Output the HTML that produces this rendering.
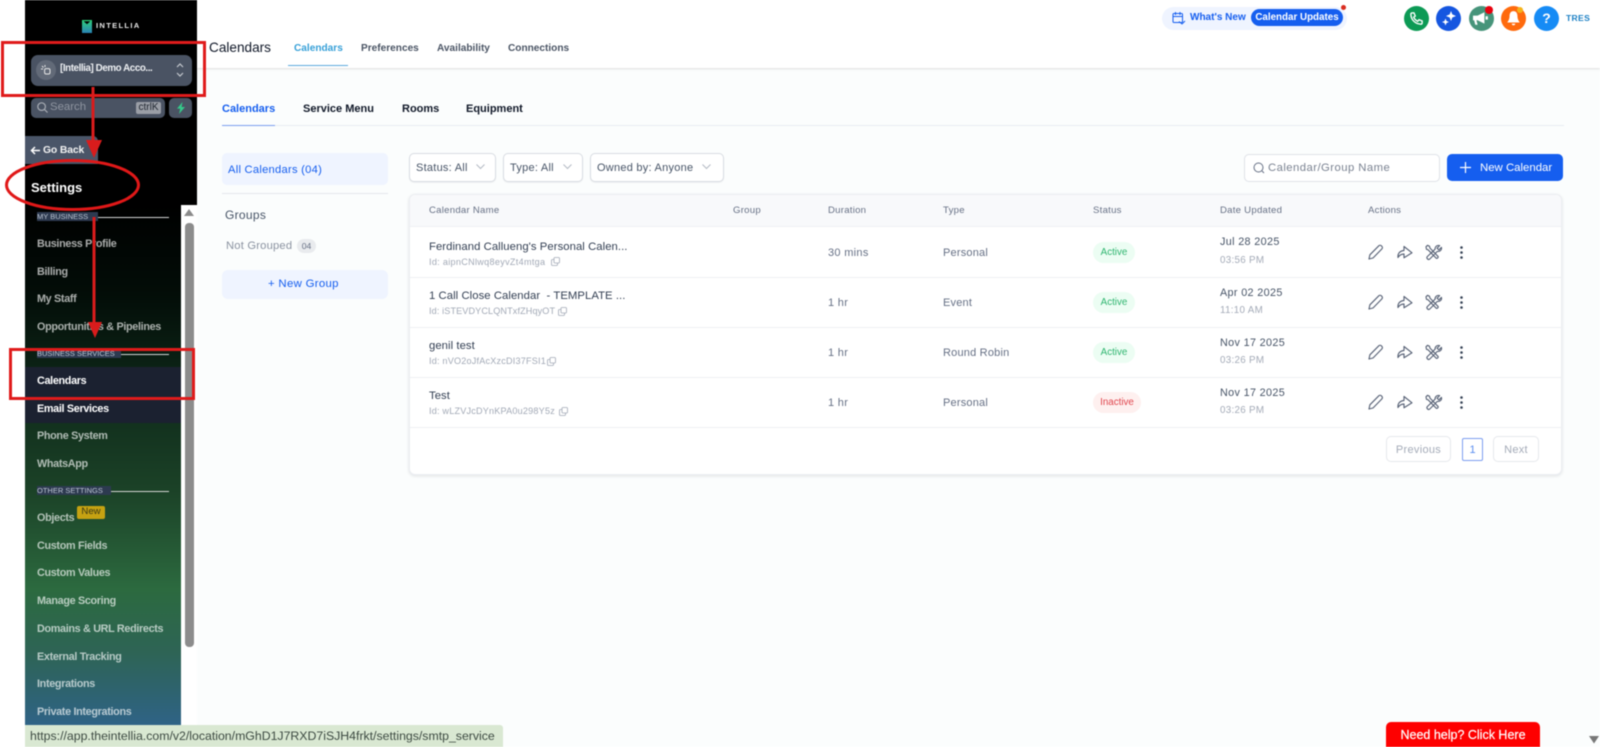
<!DOCTYPE html>
<html lang="en">
<head>
<meta charset="utf-8">
<title>Calendars</title>
<style>
html,body{margin:0;padding:0;width:1600px;height:747px;overflow:hidden;background:#fff;font-family:"Liberation Sans",sans-serif}
#wrap{position:absolute;left:0;top:0;width:1600px;height:747px;overflow:hidden;filter:blur(.45px)}
.a{position:absolute}
.t{position:absolute;white-space:nowrap;line-height:16px}
.m{font-weight:700;font-size:10.8px;letter-spacing:-.32px;left:37px;color:rgba(255,255,255,.66)}
.sec{position:absolute;left:37px;height:9px;background:#2d3a50;color:#bcc5d3;font-size:7.5px;line-height:9px;white-space:nowrap;font-weight:400}
.ln{position:absolute;height:1px;background:#d5d5d5}
.hl{position:absolute;left:410px;width:1152px;height:1px;background:#eef0f3}
.th{font-size:9.6px;color:#667085;top:203px;letter-spacing:.25px}
.nm{font-size:11.3px;color:#344054;left:429px;letter-spacing:.06px}
.id{font-size:9.1px;color:#a2a9b6;left:429px;letter-spacing:.2px}
.dr{font-size:11px;color:#667085;left:828px;letter-spacing:.3px}
.ty{font-size:11px;color:#667085;left:943px;letter-spacing:.2px}
.dt{font-size:10.8px;color:#475467;left:1220px;letter-spacing:.35px}
.tm{font-size:9.8px;color:#a4abb8;left:1220px;letter-spacing:.3px}
.pill{position:absolute;left:1093px;height:21px;border-radius:11px;font-size:9.8px;line-height:22px;text-align:center}
.fb{position:absolute;top:153px;height:27px;border:1px solid #d8dce2;border-radius:5px;background:#fff;box-shadow:0 1px 1px rgba(16,24,40,.05);font-size:11px;color:#475467;line-height:28px;padding-left:6px;box-sizing:content-box;letter-spacing:.25px;white-space:nowrap}
.c{position:absolute;border-radius:50%;width:25px;height:25px;top:6px}
svg{position:absolute;overflow:visible}
</style>
</head>
<body>
<div id="wrap">
<!-- page backgrounds -->
<div class="a" style="left:197px;top:69px;width:1403px;height:678px;background:#fbfdfd"></div>
<div class="a" style="left:197px;top:0;width:1403px;height:68px;background:#fff;box-shadow:0 1px 2px rgba(0,0,0,.14)"></div>
<div class="a" style="left:181px;top:204px;width:16px;height:521px;background:#fff"></div>

<!-- sidebar -->
<div class="a" style="left:25px;top:0;width:172px;height:205px;background:#000"></div>
<div class="a" style="left:25px;top:204px;width:156px;height:521px;background:linear-gradient(180deg,#000 0,#030d08 90px,#0f2a1a 190px,#1c4328 290px,#2c6a3f 385px,#2e6456 450px,#2f6386 521px)"></div>

<!-- logo -->
<svg style="left:82px;top:20px" width="10" height="13" viewBox="0 0 10 13"><defs><linearGradient id="lg" x1="0" y1="0" x2="0" y2="1"><stop offset="0" stop-color="#2fd27a"/><stop offset="1" stop-color="#2a82b4"/></linearGradient></defs><path d="M0 0h10v13H0z" fill="url(#lg)"/><path d="M1.600 1.200L5 4.200 8.400 1.200z" fill="#000"/></svg>
<div class="t" style="left:96px;top:18px;color:#e8e8e8;font-size:7.6px;font-weight:700;letter-spacing:1.3px">INTELLIA</div>

<!-- account -->
<div class="a" style="left:31px;top:55px;width:161px;height:31px;background:#4a5363;border-radius:7px"></div>
<div class="a" style="left:36px;top:60px;width:20px;height:20px;border-radius:50%;background:#626a78"></div>
<svg style="left:41px;top:65px" width="10" height="10" viewBox="0 0 10 10" fill="none" stroke="#e8e8e8" stroke-width="1"><path d="M1 1l1.500 1.500M4 0v2M0 4h2"/><rect x="3.600" y="3.600" width="5.400" height="5.400" rx="1.500"/></svg>
<div class="t" style="left:60px;top:60px;color:#eef0f3;font-size:9.8px;font-weight:700;letter-spacing:-.42px;line-height:18px">[Intellia] Demo Acco...</div>
<svg style="left:175px;top:62px" width="10" height="16" viewBox="0 0 10 16" fill="none" stroke="#c4c8ce" stroke-width="1.200"><path d="M2 5l3-3 3 3M2 11l3 3 3-3"/></svg>

<!-- search -->
<div class="a" style="left:31px;top:98px;width:134px;height:20px;background:#4a5363;border-radius:5px"></div>
<svg style="left:36px;top:101px" width="13" height="13" viewBox="0 0 13 13" fill="none" stroke="#a8adb5" stroke-width="1.200"><circle cx="5.600" cy="5.600" r="3.800"/><path d="M8.500 8.500l3 3"/></svg>
<div class="t" style="left:50px;top:99px;color:#8f95a0;font-size:11.4px;">Search</div>
<div class="a" style="left:136px;top:102px;width:25px;height:12px;background:#9a9ea6;border-radius:2px;color:#1f2630;font-size:10px;line-height:12px;text-align:center">ctrlK</div>
<div class="a" style="left:169px;top:98px;width:23px;height:20px;background:#4a5363;border-radius:5px"></div>
<svg style="left:176px;top:102px" width="10" height="12" viewBox="0 0 10 12"><path d="M6.500 0L1 6.600h3.200L3 12l6-7H5.600z" fill="#35c98a"/></svg>

<!-- go back -->
<div class="a" style="left:25px;top:136px;width:73px;height:28px;background:#4a5568;border-radius:0 5px 0 0"></div>
<svg style="left:30px;top:145px" width="11" height="11" viewBox="0 0 11 11" fill="none" stroke="#fff" stroke-width="1.500"><path d="M10 5.500H1.500M5 2L1.500 5.500 5 9"/></svg>
<div class="t" style="left:43px;top:142px;color:#f2f2f2;font-size:10.4px;font-weight:700;letter-spacing:-.15px;line-height:18px">Go Back</div>
<div class="t" style="left:31px;top:180px;color:#fff;font-size:13px;font-weight:700">Settings</div>

<!-- menu -->
<div class="sec" style="top:212px;width:61px">MY BUSINESS</div><div class="ln" style="left:98px;top:217px;width:71px"></div>
<div class="t m" style="top:236px">Business Profile</div>
<div class="t m" style="top:264px">Billing</div>
<div class="t m" style="top:291px">My Staff</div>
<div class="t m" style="top:318px;line-height:18px">Opportunities &amp; Pipelines</div>
<div class="sec" style="top:349px;width:84px">BUSINESS SERVICES</div><div class="ln" style="left:121px;top:354px;width:48px"></div>
<div class="a" style="left:25px;top:367px;width:156px;height:56px;background:#1b2130"></div>
<div class="t m" style="top:373px;color:#fff">Calendars</div>
<div class="t m" style="top:401px;color:#fff">Email Services</div>
<div class="t m" style="top:428px">Phone System</div>
<div class="t m" style="top:456px">WhatsApp</div>
<div class="sec" style="top:486px;width:74px">OTHER SETTINGS</div><div class="ln" style="left:111px;top:491px;width:58px"></div>
<div class="t m" style="top:510px">Objects</div>
<div class="a" style="left:77px;top:506px;width:28px;height:13px;background:#c6a212;border-radius:2px;color:#3b3a15;font-size:9.6px;line-height:12px;text-align:center">New</div>
<div class="t m" style="top:538px">Custom Fields</div>
<div class="t m" style="top:565px">Custom Values</div>
<div class="t m" style="top:593px">Manage Scoring</div>
<div class="t m" style="top:621px">Domains &amp; URL Redirects</div>
<div class="t m" style="top:649px">External Tracking</div>
<div class="t m" style="top:676px">Integrations</div>
<div class="t m" style="top:704px">Private Integrations</div>

<!-- scrollbar -->
<svg style="left:184px;top:209px" width="10" height="8" viewBox="0 0 10 8"><path d="M5 0l5 7H0z" fill="#8a8a8a"/></svg>
<div class="a" style="left:185px;top:223px;width:9px;height:424px;background:#8c8c8c;border-radius:4px"></div>

<!-- status bar -->
<div class="a" style="left:25px;top:725px;width:478px;height:22px;background:#d9e8d2;border-radius:0 3px 0 0;color:#3d4a42;font-size:12.3px;line-height:22px;padding-left:5px;box-sizing:border-box;white-space:nowrap">https://app.theintellia.com/v2/location/mGhD1J7RXD7iSJH4frkt/settings/smtp_service</div>

<!-- top bar -->
<div class="a" style="left:1162px;top:7px;width:185px;height:23px;background:#eff4ff;border-radius:12px"></div>
<svg style="left:1172px;top:11px" width="14" height="15" viewBox="0 0 14 15" fill="none" stroke="#155eef" stroke-width="1"><rect x="1" y="2.500" width="9.500" height="9" rx="1"/><path d="M1 5.500h9.500M3.500 1v3M8 1v3M7 10.500l3 2.500 3-3"/></svg>
<div class="t" style="left:1190px;top:10px;color:#155eef;font-size:10px;font-weight:700;">What's New</div>
<div class="a" style="left:1251px;top:9px;width:92px;height:17px;background:#155eef;border-radius:9px;color:#fff;font-size:9.800px;font-weight:700;line-height:18px;text-align:center;white-space:nowrap">Calendar Updates</div>
<div class="a" style="left:1341px;top:5px;width:5px;height:5px;background:#d92d20;border-radius:50%"></div>

<div class="c" style="left:1404px;background:#0c9a55"></div>
<svg style="left:1409px;top:11px" width="15" height="15" viewBox="0 0 24 24" fill="none" stroke="#fff" stroke-width="2.200"><path d="M5 3h3l2 5-2.500 2a13 13 0 0 0 6.500 6.500L16 14l5 2v3a2 2 0 0 1-2 2A16 16 0 0 1 3 5a2 2 0 0 1 2-2z"/></svg>
<div class="c" style="left:1436px;background:#1556e0"></div>
<svg style="left:1441px;top:11px" width="15" height="15" viewBox="0 0 15 15" fill="#fff"><path d="M10 0l1.300 3.400L15 5l-3.700 1.500L10 10 8.700 6.500 5 5l3.700-1.600zM4.500 7.500l1 2.500 2.500 1-2.500 1-1 2.500-1-2.500L1 11l2.500-1z"/></svg>
<div class="c" style="left:1469px;background:#46947a"></div>
<svg style="left:1473px;top:11px" width="16" height="15" viewBox="0 0 14 13" fill="#fff"><path d="M0 4h4l6-3v10L4 8H3l1 4H2L1 8H0zM11 4.500h2v3h-2z"/></svg>
<div class="a" style="left:1485px;top:6px;width:8px;height:8px;background:#e8000d;border-radius:50%"></div>
<div class="c" style="left:1501px;background:#ff6a0d"></div>
<svg style="left:1506px;top:10px" width="15" height="17" viewBox="0 0 13 15" fill="#fff"><path d="M6.500 1C4 1 3 3 3 5.500 3 8 2 9.500 1 11h11c-1-1.500-2-3-2-5.500C10 3 9 1 6.500 1zM5 12h3a1.500 1.500 0 0 1-3 0z"/></svg>
<div class="a" style="left:1517px;top:7px;width:6px;height:6px;background:#f5b31a;border-radius:50%"></div>
<div class="c" style="left:1534px;background:#168bf5;color:#fff;font-size:14px;font-weight:700;line-height:25px;text-align:center">?</div>
<div class="t" style="left:1566px;top:10px;color:#1a7fc4;font-size:8.600px;font-weight:700;letter-spacing:.3px">TRES</div>

<!-- header tabs -->
<div class="t" style="left:209px;top:39px;color:#101828;font-size:13.600px;line-height:18px">Calendars</div>
<div class="t" style="left:294px;top:41px;color:#37a0d8;font-size:10.100px;font-weight:700">Calendars</div>
<div class="a" style="left:288px;top:65px;width:60px;height:1px;background:#5ca9dd"></div>
<div class="t" style="left:361px;top:41px;color:#4b5565;font-size:10.100px;font-weight:700">Preferences</div>
<div class="t" style="left:437px;top:41px;color:#4b5565;font-size:10.100px;font-weight:700">Availability</div>
<div class="t" style="left:508px;top:41px;color:#4b5565;font-size:10.100px;font-weight:700">Connections</div>

<!-- sub tabs -->
<div class="a" style="left:222px;top:125px;width:1342px;height:1px;background:#e9ecf2"></div>
<div class="t" style="left:222px;top:101px;color:#155eef;font-size:11px;font-weight:700">Calendars</div>
<div class="a" style="left:222px;top:125px;width:53px;height:1px;background:#7c9ef0"></div>
<div class="t" style="left:303px;top:101px;color:#101828;font-size:11px;font-weight:700">Service Menu</div>
<div class="t" style="left:402px;top:101px;color:#101828;font-size:11px;font-weight:700">Rooms</div>
<div class="t" style="left:466px;top:101px;color:#101828;font-size:11px;font-weight:700">Equipment</div>

<!-- left panel -->
<div class="a" style="left:222px;top:153px;width:166px;height:32px;background:#eff4ff;border-radius:5px"></div>
<div class="t" style="left:228px;top:162px;color:#155eef;font-size:11.200px;letter-spacing:.25px">All Calendars (04)</div>
<div class="a" style="left:222px;top:193px;width:166px;height:1px;background:#e4e7ec"></div>
<div class="t" style="left:225px;top:207px;color:#475467;font-size:12px;letter-spacing:.3px">Groups</div>
<div class="t" style="left:226px;top:238px;color:#8a92a0;font-size:11.200px;letter-spacing:.2px">Not Grouped</div>
<div class="a" style="left:297px;top:239px;width:19px;height:14px;background:#e9ebee;border-radius:7px;color:#667085;font-size:8.600px;line-height:14px;text-align:center">04</div>
<div class="a" style="left:222px;top:270px;width:166px;height:29px;background:#eff4ff;border-radius:6px"></div>
<div class="t" style="left:268px;top:276px;color:#155eef;font-size:11.400px;letter-spacing:.3px">+ New Group</div>

<!-- filters -->
<div class="fb" style="left:409px;width:79px">Status: All</div>
<svg style="left:476px;top:164px" width="9" height="6" viewBox="0 0 9 6" fill="none" stroke="#b4bac4"><path d="M.5 .5l4 4 4-4"/></svg>
<div class="fb" style="left:503px;width:72px">Type: All</div>
<svg style="left:563px;top:164px" width="9" height="6" viewBox="0 0 9 6" fill="none" stroke="#b4bac4"><path d="M.5 .5l4 4 4-4"/></svg>
<div class="fb" style="left:590px;width:126px">Owned by: Anyone</div>
<svg style="left:702px;top:164px" width="9" height="6" viewBox="0 0 9 6" fill="none" stroke="#b4bac4"><path d="M.5 .5l4 4 4-4"/></svg>

<div class="a" style="left:1244px;top:154px;width:194px;height:26px;border:1px solid #dfe2e8;border-radius:5px;background:#fff"></div>
<svg style="left:1253px;top:162px" width="12" height="12" viewBox="0 0 12 12" fill="none" stroke="#667085"><circle cx="5.500" cy="5.500" r="4.500"/><path d="M9 9l2 2"/></svg>
<div class="t" style="left:1268px;top:160px;color:#7a8291;font-size:11.300px;letter-spacing:.45px">Calendar/Group Name</div>
<div class="a" style="left:1447px;top:154px;width:116px;height:27px;background:#155eef;border-radius:5px"></div>
<svg style="left:1460px;top:162px" width="11" height="11" viewBox="0 0 11 11" stroke="#fff" stroke-width="1.200"><path d="M5.500 0v11M0 5.500h11"/></svg>
<div class="t" style="left:1480px;top:160px;color:#fff;font-size:11.400px;">New Calendar</div>

<!-- table -->
<div class="a" style="left:409px;top:194px;width:1153px;height:281px;background:#fff;border:1px solid #eceef2;border-radius:6px;box-shadow:0 1px 3px rgba(16,24,40,.12);box-sizing:border-box"></div>
<div class="a" style="left:410px;top:195px;width:1151px;height:31px;background:#f8f9fb;border-radius:6px 6px 0 0"></div>
<div class="hl" style="top:226px"></div><div class="hl" style="top:277px"></div><div class="hl" style="top:327px"></div><div class="hl" style="top:377px"></div><div class="hl" style="top:427px"></div>

<div class="t th" style="left:429px">Calendar Name</div>
<div class="t th" style="left:733px">Group</div>
<div class="t th" style="left:828px">Duration</div>
<div class="t th" style="left:943px">Type</div>
<div class="t th" style="left:1093px">Status</div>
<div class="t th" style="left:1220px">Date Updated</div>
<div class="t th" style="left:1368px">Actions</div>

<!-- row 1 -->
<div class="t nm" style="top:239px">Ferdinand Callueng's Personal Calen...</div>
<div class="t id" style="top:254px;letter-spacing:.3px">Id: aipnCNlwq8eyvZt4mtga</div>
<svg style="left:551px;top:257px" width="9" height="9" viewBox="0 0 9 9" fill="none" stroke="#a2a9b6" stroke-width=".8"><rect x="3" y=".5" width="5.500" height="5.500" rx="1"/><path d="M3 2.500H1.500a1 1 0 0 0-1 1V7.500a1 1 0 0 0 1 1h4a1 1 0 0 0 1-1V6"/></svg>
<div class="t dr" style="top:245px">30 mins</div>
<div class="t ty" style="top:245px">Personal</div>
<div class="pill" style="top:242px;width:42px;background:#ecfdf3;color:#2eb56f">Active</div>
<div class="t dt" style="top:234px">Jul 28 2025</div>
<div class="t tm" style="top:253px">03:56 PM</div>

<!-- row 2 -->
<div class="t nm" style="top:288px">1 Call Close Calendar &nbsp;- TEMPLATE ...</div>
<div class="t id" style="top:303px;letter-spacing:.12px">Id: iSTEVDYCLQNTxfZHqyOT</div>
<svg style="left:558px;top:307px" width="9" height="9" viewBox="0 0 9 9" fill="none" stroke="#a2a9b6" stroke-width=".8"><rect x="3" y=".5" width="5.500" height="5.500" rx="1"/><path d="M3 2.500H1.500a1 1 0 0 0-1 1V7.500a1 1 0 0 0 1 1h4a1 1 0 0 0 1-1V6"/></svg>
<div class="t dr" style="top:295px">1 hr</div>
<div class="t ty" style="top:295px">Event</div>
<div class="pill" style="top:292px;width:42px;background:#ecfdf3;color:#2eb56f">Active</div>
<div class="t dt" style="top:285px">Apr 02 2025</div>
<div class="t tm" style="top:303px">11:10 AM</div>

<!-- row 3 -->
<div class="t nm" style="top:338px">genil test</div>
<div class="t id" style="top:353px">Id: nVO2oJfAcXzcDI37FSI1</div>
<svg style="left:547px;top:357px" width="9" height="9" viewBox="0 0 9 9" fill="none" stroke="#a2a9b6" stroke-width=".8"><rect x="3" y=".5" width="5.500" height="5.500" rx="1"/><path d="M3 2.500H1.500a1 1 0 0 0-1 1V7.500a1 1 0 0 0 1 1h4a1 1 0 0 0 1-1V6"/></svg>
<div class="t dr" style="top:345px">1 hr</div>
<div class="t ty" style="top:345px">Round Robin</div>
<div class="pill" style="top:342px;width:42px;background:#ecfdf3;color:#2eb56f">Active</div>
<div class="t dt" style="top:335px">Nov 17 2025</div>
<div class="t tm" style="top:353px">03:26 PM</div>

<!-- row 4 -->
<div class="t nm" style="top:388px">Test</div>
<div class="t id" style="top:403px">Id: wLZVJcDYnKPA0u298Y5z</div>
<svg style="left:559px;top:407px" width="9" height="9" viewBox="0 0 9 9" fill="none" stroke="#a2a9b6" stroke-width=".8"><rect x="3" y=".5" width="5.500" height="5.500" rx="1"/><path d="M3 2.500H1.500a1 1 0 0 0-1 1V7.500a1 1 0 0 0 1 1h4a1 1 0 0 0 1-1V6"/></svg>
<div class="t dr" style="top:395px">1 hr</div>
<div class="t ty" style="top:395px">Personal</div>
<div class="pill" style="top:392px;width:48px;background:#fef0ef;color:#e0454d">Inactive</div>
<div class="t dt" style="top:385px">Nov 17 2025</div>
<div class="t tm" style="top:403px">03:26 PM</div>

<!-- action icons -->
<svg width="0" height="0" style="position:absolute"><defs>
<g id="acts" fill="none" stroke="#5a6478" stroke-width="1.150" stroke-linejoin="round" stroke-linecap="round">
<path d="M1 15l.9-4.200L10.800 1.800a1.800 1.800 0 0 1 2.500 0l.6.6a1.800 1.800 0 0 1 0 2.500L5 14z"/>
<path d="M30 13.500c-.4-3.600 1.200-6.500 6-7V2.500l8 6.300-8 5V10c-2.700 0-4.400 1-6 3.500z"/>
<path d="M58 2.800l1.500-1.500 2 1 .4 1.700 8 8.300c.9.900-.900 2.800-1.800 1.800l-8-8.300-1.600-.5zM73.400 3.400l-2.600 2.500-1.700-1.700 2.500-2.600c-2.500-.8-4.800 1.100-4.500 3.600l-7.700 7.300c-1.500 1.700 1 3.900 2.500 2.400l7.400-7.500c2.600.5 4.800-1.700 4.100-4z"/>
</g>
<g id="dots" fill="#344054"><circle cx="1.500" cy="1.500" r="1.300"/><circle cx="1.500" cy="6.500" r="1.300"/><circle cx="1.500" cy="11.500" r="1.300"/></g>
</defs></svg>
<svg style="left:1368px;top:244px" width="80" height="16"><use href="#acts"/></svg>
<svg style="left:1460px;top:246px" width="3" height="13"><use href="#dots"/></svg>
<svg style="left:1368px;top:294px" width="80" height="16"><use href="#acts"/></svg>
<svg style="left:1460px;top:296px" width="3" height="13"><use href="#dots"/></svg>
<svg style="left:1368px;top:344px" width="80" height="16"><use href="#acts"/></svg>
<svg style="left:1460px;top:346px" width="3" height="13"><use href="#dots"/></svg>
<svg style="left:1368px;top:394px" width="80" height="16"><use href="#acts"/></svg>
<svg style="left:1460px;top:396px" width="3" height="13"><use href="#dots"/></svg>

<!-- pagination -->
<div class="a" style="left:1386px;top:436px;width:65px;height:26px;box-sizing:border-box;border:1px solid #e6e8ec;border-radius:5px;color:#a4abb8;font-size:11px;line-height:26px;text-align:center;letter-spacing:.3px">Previous</div>
<div class="a" style="left:1462px;top:438px;width:21px;height:23px;box-sizing:border-box;border:1px solid #7c9ef0;border-radius:2px;color:#5a8df0;font-size:11px;line-height:22px;text-align:center">1</div>
<div class="a" style="left:1493px;top:436px;width:46px;height:26px;box-sizing:border-box;border:1px solid #e6e8ec;border-radius:5px;color:#a4abb8;font-size:11px;line-height:26px;text-align:center;letter-spacing:.3px">Next</div>

<!-- help -->
<div class="a" style="left:1386px;top:722px;width:154px;height:25px;background:#fe0000;border-radius:5px 5px 0 0;color:#fff;font-size:12.500px;line-height:26px;text-align:center;white-space:nowrap;-webkit-text-stroke:.2px #fff">Need help? Click Here</div>
<svg style="left:1589px;top:736px" width="10" height="8" viewBox="0 0 10 8"><path d="M0 0h10L5 7.500z" fill="#777"/></svg>

<!-- red annotations -->
<div class="a" style="left:1px;top:41px;width:205px;height:56px;box-sizing:border-box;border:3px solid #e01b1b"></div>
<div class="a" style="left:9px;top:348px;width:186px;height:52px;box-sizing:border-box;border:3px solid #e01b1b"></div>
<svg style="left:0;top:0" width="200" height="400" viewBox="0 0 200 400" fill="none">
<path d="M93 87V142" stroke="#d91c1c" stroke-width="3"/>
<path d="M86 140h16L94 158z" fill="#d91c1c"/>
<ellipse cx="72.500" cy="185" rx="66" ry="24.500" stroke="#e01818" stroke-width="3"/>
<path d="M94 217V324" stroke="#d91c1c" stroke-width="3"/>
<path d="M88 322h14l-7 16z" fill="#d91c1c"/>
</svg>
</div>
</body>
</html>
